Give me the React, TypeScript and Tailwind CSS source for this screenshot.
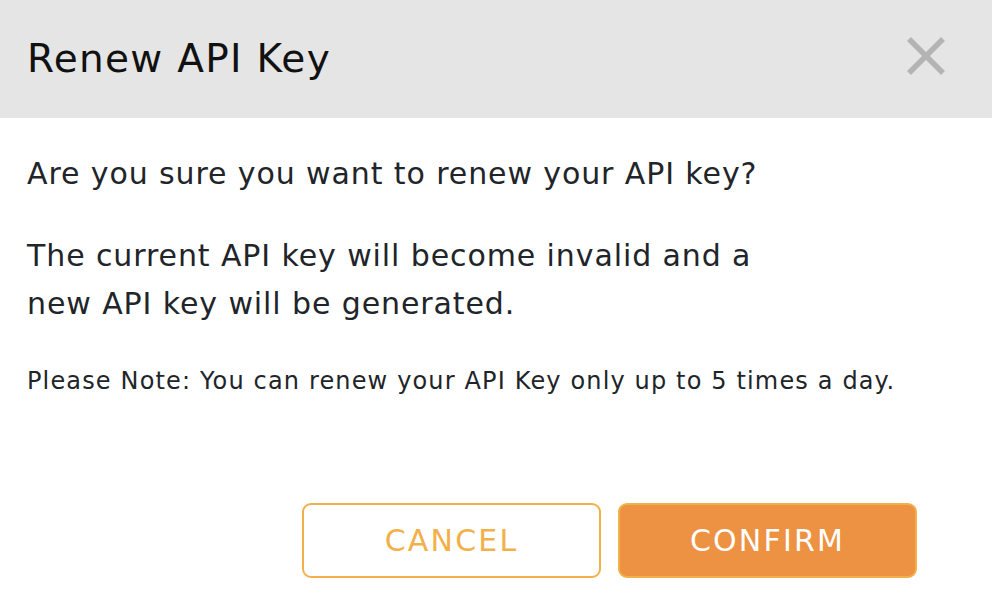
export default function App() {
  return (
    <div className="w-[992px] h-[607px] bg-white overflow-hidden font-['DejaVu_Sans',sans-serif] text-[#212529]">
      <div className="h-[118px] bg-[#e5e5e5] flex items-center justify-between pl-[27px] pr-[46px]">
        <h1 className="text-[39px] leading-none tracking-[1.3px] text-[#111] pb-[2px]">Renew API Key</h1>
        <svg width="40" height="40" viewBox="0 0 40 40" className="mt-[-6px]">
          <line x1="3" y1="3" x2="37" y2="37" stroke="#b4b4b4" strokeWidth="5.5" />
          <line x1="37" y1="3" x2="3" y2="37" stroke="#b4b4b4" strokeWidth="5.5" />
        </svg>
      </div>

      <div className="px-[27px] pt-[32px]">
        <p className="text-[30px] leading-[48px] tracking-[0.9px]">Are you sure you want to renew your API key?</p>
        <p className="mt-[34px] text-[30px] leading-[48px] tracking-[0.9px]">
          The current API key will become invalid and a<br />
          new API key will be generated.
        </p>
        <p className="mt-[37px] text-[24px] leading-[32px] tracking-[1.15px]">
          Please Note: You can renew your API Key only up to 5 times a day.
        </p>
      </div>

      <div className="flex justify-end gap-[17px] pr-[75px] mt-[106px]">
        <button className="w-[299px] h-[75px] rounded-[9px] border-2 border-[#f2b04a] bg-white text-[#f2b04a] text-[30px] tracking-[2.2px] leading-none">
          CANCEL
        </button>
        <button className="w-[299px] h-[75px] rounded-[9px] border-2 border-[#f2b04a] bg-[#ed9142] text-white text-[30px] tracking-[2.2px] leading-none">
          CONFIRM
        </button>
      </div>
    </div>
  );
}
